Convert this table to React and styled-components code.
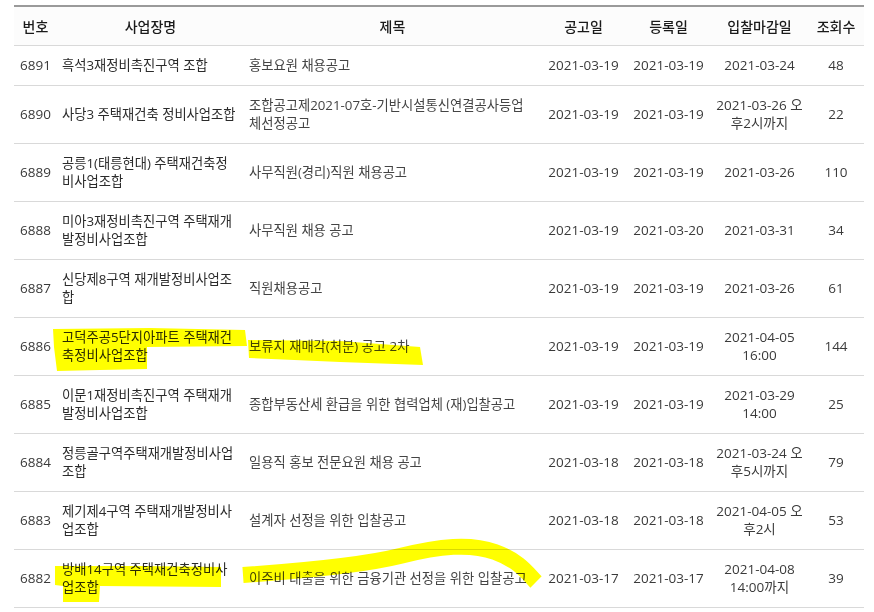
import React from "react";
import styled, { createGlobalStyle } from "styled-components";

const GlobalStyle = createGlobalStyle`
  *, *::before, *::after { box-sizing: border-box; }
  html, body { margin: 0; padding: 0; background: #ffffff; }
  body {
    font-family: "Open Sans", "Noto Sans CJK KR", sans-serif;
    color: #333333;
  }
`;

const Page = styled.div`
  position: relative;
  width: 874px;
  height: 612px;
  padding: 5px 10px 0 14px;
  overflow: hidden;
`;

const Table = styled.table`
  width: 850px;
  table-layout: fixed;
  border-collapse: separate;
  border-spacing: 0;
`;

const HeadCell = styled.th`
  width: ${(p) => p.$w}px;
  height: 40px;
  padding: 9px 4px;
  border-top: 2px solid #9a9a9a;
  border-bottom: 1px solid #d9d9d9;
  background: #fcfcfc;
  font-family: "Noto Sans CJK KR", sans-serif;
  font-size: 14px;
  font-weight: 500;
  line-height: 20px;
  color: #1a1a1a;
  text-align: center;
  white-space: nowrap;
`;

const sizes = { name: "13.3px", title: "13.3px", numeric: "13.5px" };
const tones = { name: "#2b2b2b", title: "#444444", numeric: "#3a3a3a" };

const Cell = styled.td`
  padding: 10px 5px 11px;
  border-bottom: 1px solid #d9d9d9;
  font-size: ${(p) => sizes[p.$kind || "numeric"]};
  line-height: 18px;
  color: ${(p) => tones[p.$kind || "numeric"]};
  text-align: ${(p) => (p.$kind === "name" || p.$kind === "title" ? "left" : "center")};
  vertical-align: middle;
  white-space: pre;
`;

const Highlighter = styled.svg`
  position: absolute;
  left: 0;
  top: 0;
  width: 874px;
  height: 612px;
  pointer-events: none;
  mix-blend-mode: multiply;
`;

const columns = [
  { label: "번호", w: 43 },
  { label: "사업장명", w: 187 },
  { label: "제목", w: 297 },
  { label: "공고일", w: 85 },
  { label: "등록일", w: 85 },
  { label: "입찰마감일", w: 97 },
  { label: "조회수", w: 56 },
];

const rows = [
  { no: 6891, name: "흑석3재정비촉진구역 조합", title: "홍보요원 채용공고", notice: "2021-03-19", reg: "2021-03-19", due: "2021-03-24", views: 48 },
  { no: 6890, name: "사당3 주택재건축 정비사업조합", title: "조합공고제2021-07호-기반시설통신연결공사등업\n체선정공고", notice: "2021-03-19", reg: "2021-03-19", due: "2021-03-26 오\n후2시까지", views: 22 },
  { no: 6889, name: "공릉1(태릉현대) 주택재건축정\n비사업조합", title: "사무직원(경리)직원 채용공고", notice: "2021-03-19", reg: "2021-03-19", due: "2021-03-26", views: 110 },
  { no: 6888, name: "미아3재정비촉진구역 주택재개\n발정비사업조합", title: "사무직원 채용 공고", notice: "2021-03-19", reg: "2021-03-20", due: "2021-03-31", views: 34 },
  { no: 6887, name: "신당제8구역 재개발정비사업조\n합", title: "직원채용공고", notice: "2021-03-19", reg: "2021-03-19", due: "2021-03-26", views: 61 },
  { no: 6886, name: "고덕주공5단지아파트 주택재건\n축정비사업조합", title: "보류지 재매각(처분) 공고 2차", notice: "2021-03-19", reg: "2021-03-19", due: "2021-04-05\n16:00", views: 144 },
  { no: 6885, name: "이문1재정비촉진구역 주택재개\n발정비사업조합", title: "종합부동산세 환급을 위한 협력업체 (재)입찰공고", notice: "2021-03-19", reg: "2021-03-19", due: "2021-03-29\n14:00", views: 25 },
  { no: 6884, name: "정릉골구역주택재개발정비사업\n조합", title: "일용직 홍보 전문요원 채용 공고", notice: "2021-03-18", reg: "2021-03-18", due: "2021-03-24 오\n후5시까지", views: 79 },
  { no: 6883, name: "제기제4구역 주택재개발정비사\n업조합", title: "설계자 선정을 위한 입찰공고", notice: "2021-03-18", reg: "2021-03-18", due: "2021-04-05 오\n후2시", views: 53 },
  { no: 6882, name: "방배14구역 주택재건축정비사\n업조합", title: "이주비 대출을 위한 금융기관 선정을 위한 입찰공고", notice: "2021-03-17", reg: "2021-03-17", due: "2021-04-08\n14:00까지", views: 39 },
];

export default function App() {
  return (
    <>
      <GlobalStyle />
      <Page>
        <Table>
          <thead>
            <tr>
              {columns.map((c) => (
                <HeadCell key={c.label} $w={c.w}>
                  {c.label}
                </HeadCell>
              ))}
            </tr>
          </thead>
          <tbody>
            {rows.map((r) => (
              <tr key={r.no}>
                <Cell>{r.no}</Cell>
                <Cell $kind="name">{r.name}</Cell>
                <Cell $kind="title">{r.title}</Cell>
                <Cell>{r.notice}</Cell>
                <Cell>{r.reg}</Cell>
                <Cell>{r.due}</Cell>
                <Cell>{r.views}</Cell>
              </tr>
            ))}
          </tbody>
        </Table>
        <Highlighter viewBox="0 0 874 612" aria-hidden="true">
          <g fill="#ffff00">
            <path d="M53,329 L150,328 L245,330 L247,346 L147,347 L147,369 L100,370 L57,371 L54,347 Z" />
            <path d="M248,340 L340,341 L420,347 L423,365 L340,362 L249,358 Z" />
            <path d="M55,566 L140,566 L221,567 L221,587 L100,586 L99,602 L63,602 L63,586 L55,585 Z" />
          </g>
          <path
            d="M243,575 C300,571 360,566 400,556 S470,543 495,552 S528,574 536,582"
            fill="none"
            stroke="#ffff00"
            strokeWidth="16"
          />
        </Highlighter>
      </Page>
    </>
  );
}
